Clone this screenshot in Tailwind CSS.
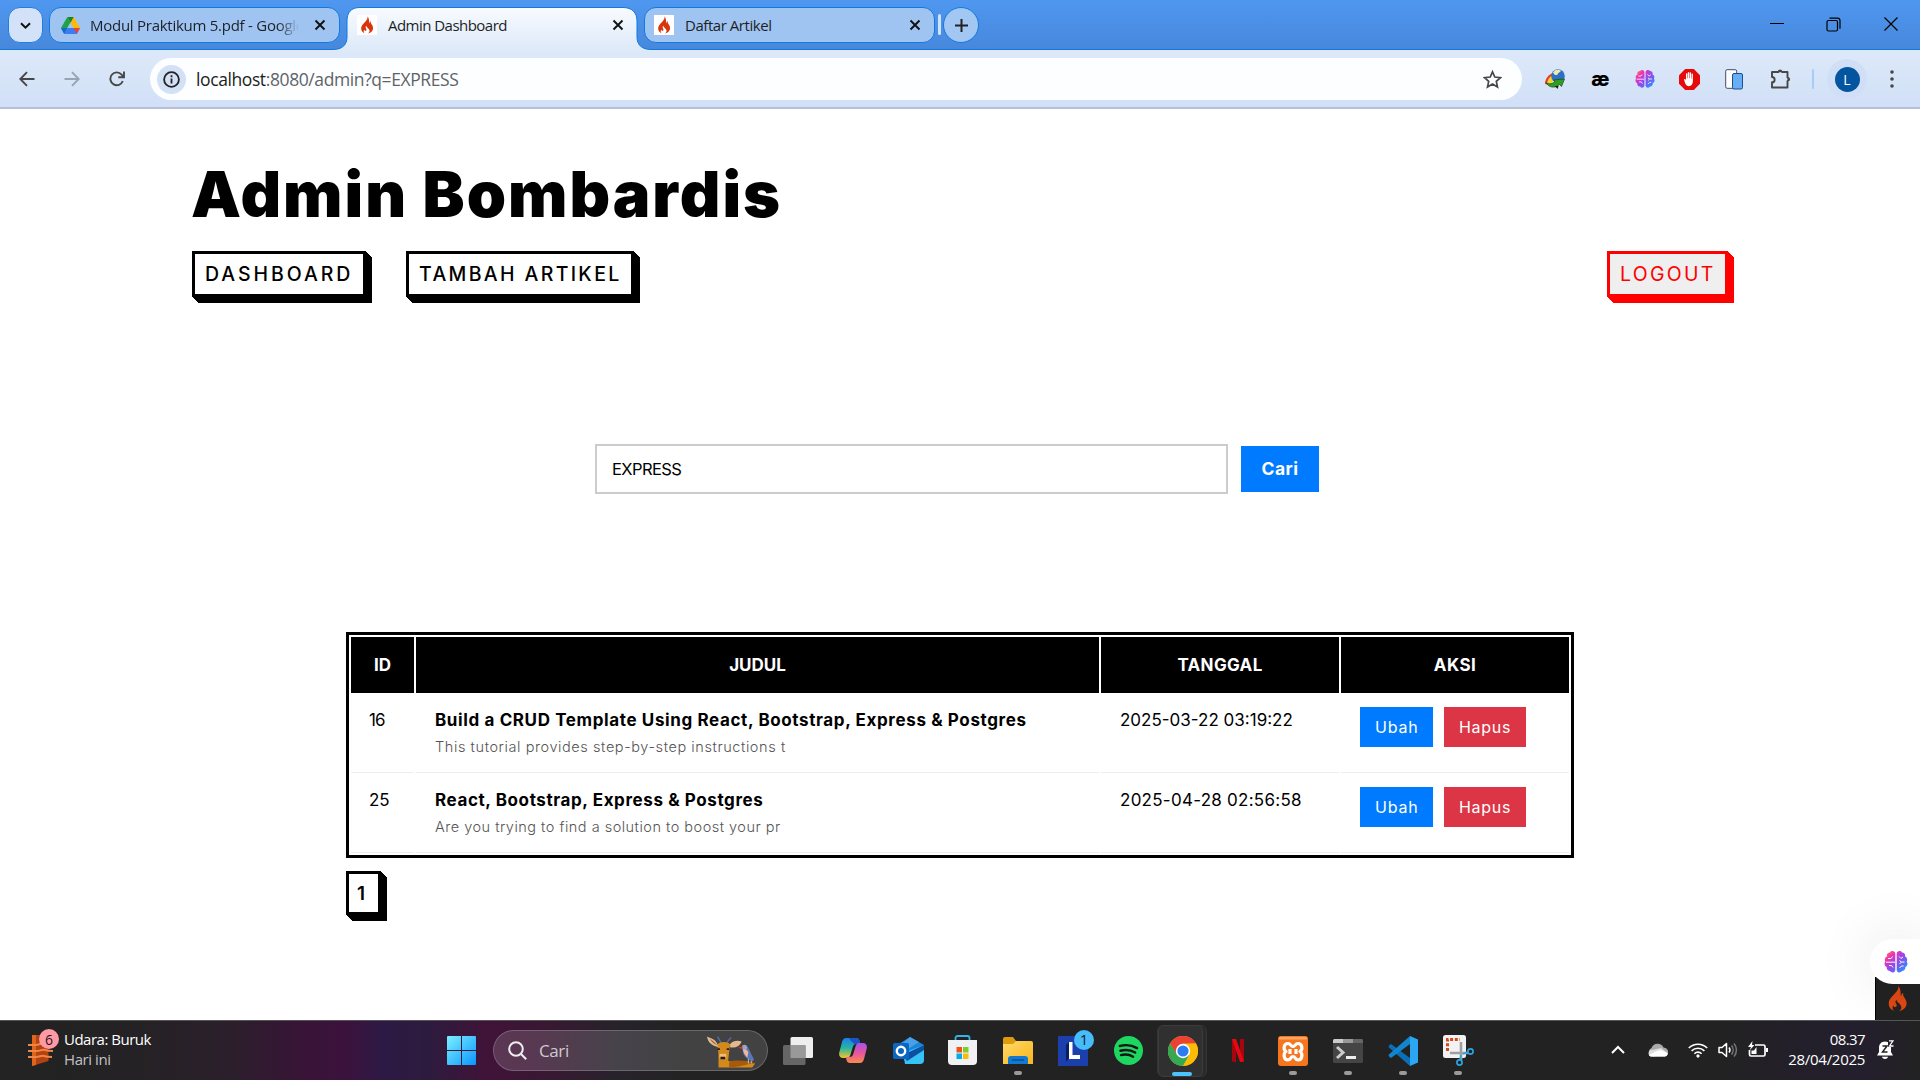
<!DOCTYPE html>
<html lang="id">
<head>
<meta charset="utf-8">
<title>Admin Dashboard</title>
<script src="https://cdn.jsdelivr.net/npm/@tailwindcss/browser@4"></script>
</head>
<body class="flex h-[1080px] w-[1920px] flex-col overflow-hidden bg-white font-['Inter',sans-serif] text-black">

<!-- shared symbols -->
<svg class="absolute size-0">
  <defs>
    <linearGradient id="brainGrad" x1="0" y1="0" x2="1" y2="1">
      <stop offset="0" stop-color="#ff9a1f"/><stop offset=".25" stop-color="#f032b4"/><stop offset=".55" stop-color="#8a4cf0"/><stop offset="1" stop-color="#12a4ff"/>
    </linearGradient>
    <linearGradient id="copA" x1="0" y1="0" x2="0" y2="1"><stop offset="0" stop-color="#1c7df0"/><stop offset=".5" stop-color="#27b6a0"/><stop offset="1" stop-color="#f2c52b"/></linearGradient>
    <linearGradient id="copB" x1="0" y1="0" x2="0" y2="1"><stop offset="0" stop-color="#a553e8"/><stop offset=".5" stop-color="#e8559f"/><stop offset="1" stop-color="#f98a4b"/></linearGradient>
    <linearGradient id="folderGrad" x1="0" y1="0" x2="1" y2="1"><stop offset="0" stop-color="#ffd968"/><stop offset="1" stop-color="#f8b51c"/></linearGradient>
    <linearGradient id="winGrad" x1="0" y1="0" x2="1" y2="1"><stop offset="0" stop-color="#7cf0ff"/><stop offset="1" stop-color="#0a94ff"/></linearGradient>
  </defs>
  <symbol id="flame" viewBox="0 0 24 24">
    <path fill="currentColor" d="M12.6.6c.8 3.200-1.400 5.200-3.600 7.600C6.400 11 4.200 13 4.200 16.600c0 3 1.900 5.300 4.900 6.600-1.700-1.600-2-3.600-.7-5.300.1 1.200.9 1.900 1.800 1.700 1.500-.2 1.400-2 .5-3.100-1-1.400-.4-2.800.5-3.500 0 2.700 4.200 3.600 4.200 6.800 0 1.500-.8 2.600-1.900 3.400 3.900-1 6.600-3.500 6.600-7 0-4.300-3.700-5.500-3.100-9.200-1.200.4-1.900 1.700-1.600 3C14 8.700 16 4.500 12.600.6z"/>
  </symbol>
  <symbol id="brain" viewBox="0 0 24 24">
    <path fill="url(#brainGrad)" d="M11.300 3.500C10.600.6 7.200.4 6 2.400 3.700 2.300 2.300 4.400 3 6.500.9 7.400.2 9.600 1.300 11.500-.2 13.600.6 16 2.700 17c-.3 2.400 1.300 4 3.400 4.100 1.300 2.200 4.600 1.900 5.200-.9zM12.700 3.500C13.400.6 16.800.4 18 2.400c2.300-.1 3.700 2 3 4.100 2.100.9 2.800 3.100 1.700 5 1.500 2.100.7 4.500-1.400 5.500.3 2.400-1.300 4-3.400 4.100-1.300 2.200-4.600 1.900-5.200-.9z"/>
    <path fill="none" stroke="#fff" stroke-width="1" d="M4 8.500h3l1.500-2M2 12.200h9M5 15.500h2.500l1.500 2M15 6.500l2 2 2-1.500M20.500 12h-3l-2 2M15.500 18l2-2h2M17.500 12l-2-1.500"/>
  </symbol>
  <symbol id="close" viewBox="0 0 12 12"><path d="M1.500 1.500l9 9M10.500 1.500l-9 9" stroke="currentColor" stroke-width="1.900" fill="none"/></symbol>
</svg>

<!-- tab strip -->
<header class="flex h-[50px] shrink-0 items-start border-b border-[#0f7ae0] bg-linear-to-b from-[#4f97f0] to-[#4788dc] pt-[7px] font-['Open_Sans',sans-serif] text-[15px] text-[#1d1f24]">
  <button class="ml-2 flex h-9 w-[35px] items-center justify-center rounded-xl border border-[#1f7fe2] bg-[#d3e2f8]">
    <svg class="size-[11px]" viewBox="0 0 11 11"><path d="M1 3.200l4.500 4.500L10 3.200" fill="none" stroke="#111" stroke-width="2"/></svg>
  </button>
  <div class="ml-[6px] flex h-9 w-[291px] items-center rounded-xl border border-[#0f7ae0] bg-[#9fc4f2] pl-[11px]">
    <svg class="h-[17px] w-[19px] shrink-0" viewBox="0 0 19 17">
      <path d="M6.300 0L0 11l3.200 5.500L9.500 5.600z" fill="#1ea446"/>
      <path d="M12.700 0L19 11h-6.400L6.400 0z" fill="#ffba00"/><path d="M6.300 0h6.400L9.500 5.700z" fill="#188038"/>
      <path d="M3.200 17L6.400 11H19l-3.200 6z" fill="#3a7df0"/><path d="M19 11l-3.200 5.800L12.600 11z" fill="#ea4335"/><path d="M0 11h6.400l-3.200 6z" fill="#1967d2"/>
      <path d="M9.500 5.700L6.400 11h6.200z" fill="#9fc4f2"/>
    </svg>
    <span class="ml-[10px] w-[218px] shrink-0 bg-linear-to-r from-[#1d1f24] from-86% to-transparent to-96% bg-clip-text tracking-[-0.26px] whitespace-nowrap text-transparent">Modul Praktikum 5.pdf - Google</span>
    <svg class="ml-[6px] size-3 shrink-0 text-[#111]"><use href="#close"/></svg>
  </div>
  <div class="relative ml-[7px] flex h-9 w-[291px] items-center pl-[10px]">
    <svg class="absolute -left-[14px] top-0 h-[44px] w-[318px]" viewBox="0 0 318 44">
      <defs><linearGradient id="tabGrad" x1="0" y1="0" x2="0" y2="1"><stop offset="0" stop-color="#f8fbff"/><stop offset="1" stop-color="#dde9f9"/></linearGradient></defs>
      <path d="M0 42.500C9 42.500 14 38 14 30V14C14 5.500 18 .5 27 .5H290C299 .5 304 5.500 304 14V30C304 38 309 42.500 318 42.500V44H0z" fill="url(#tabGrad)"/>
      <path d="M0 42.500C9 42.500 14 38 14 30V14C14 5.500 18 .5 27 .5H290C299 .5 304 5.500 304 14V30C304 38 309 42.500 318 42.500" fill="none" stroke="#0f7ae0"/>
    </svg>
    <span class="relative flex size-5 items-center justify-center bg-white text-[#d9350c]"><svg class="size-[18px]"><use href="#flame"/></svg></span>
    <span class="relative ml-[11px] w-[224px] tracking-[-0.53px]">Admin Dashboard</span>
    <svg class="relative size-3 text-[#111]"><use href="#close"/></svg>
  </div>
  <div class="ml-[6px] flex h-9 w-[291px] items-center rounded-xl border border-[#0f7ae0] bg-[#9fc4f2] pl-[9px]">
    <span class="flex size-5 items-center justify-center bg-white text-[#d9350c]"><svg class="size-[18px]"><use href="#flame"/></svg></span>
    <span class="ml-[11px] w-[224px] tracking-[-0.45px]">Daftar Artikel</span>
    <svg class="size-3 text-[#111]"><use href="#close"/></svg>
  </div>
  <span class="ml-[3px] mt-[7px] h-[21px] w-[3px] rounded bg-[#cfe2fb]"></span>
  <button class="ml-[2px] flex size-9 items-center justify-center rounded-full border border-[#0f7ae0] bg-[#a3c7f3]">
    <svg class="size-[13px]" viewBox="0 0 13 13"><path d="M6.500 0v13M0 6.500h13" stroke="#222" stroke-width="2"/></svg>
  </button>
  <div class="ml-auto mr-[22px] mt-[9px] flex items-center text-black">
    <svg class="h-4 w-[14px]" viewBox="0 0 14 16"><path d="M0 7.500h14" stroke="currentColor"/></svg>
    <svg class="ml-[42px] size-[15px]" viewBox="0 0 15 15" fill="none" stroke="currentColor" stroke-width="1.200"><rect x="1" y="3.500" width="10.500" height="10.500" rx="1.500"/><path d="M3.500 1.200h8A2.500 2.500 0 0 1 14 3.700v8"/></svg>
    <svg class="ml-[43px] size-[14px]" viewBox="0 0 14 14"><path d="M.5 .5l13 13M13.500 .5l-13 13" stroke="currentColor" stroke-width="1.200"/></svg>
  </div>
</header>

<!-- toolbar -->
<div class="flex h-[59px] shrink-0 items-center border-b-2 border-[#b7c0d6] bg-linear-to-b from-[#dde9f9] to-[#d1e0f7] pl-[19px] pt-[1px] text-[#474747]">
  <svg class="size-4" viewBox="0 0 16 16" fill="none" stroke="currentColor" stroke-width="1.900"><path d="M15.500 8H1.500M8 1.200L1.300 8 8 14.800"/></svg>
  <svg class="ml-[29px] size-4 text-[#98a3b3]" viewBox="0 0 16 16" fill="none" stroke="currentColor" stroke-width="1.900"><path d="M.5 8h14M8 1.200L14.700 8 8 14.800"/></svg>
  <svg class="ml-[29px] size-4" viewBox="0 0 16 16" fill="none" stroke="currentColor" stroke-width="1.900"><path d="M13.800 10A6.400 6.400 0 1 1 12.600 3.600L14.800 6M15 .5V6.200H9.300"/></svg>
  <div class="ml-[25px] flex h-[42px] w-[1372px] items-center rounded-full bg-[#fdfeff] pl-[7px]">
    <span class="flex size-[29px] items-center justify-center rounded-full bg-[#d3e1f7] text-[#222]">
      <svg class="size-[17px]" viewBox="0 0 17 17" fill="none" stroke="currentColor" stroke-width="1.800"><circle cx="8.500" cy="8.500" r="7.400"/><path d="M8.500 7.500v5M8.500 4.300v1.900"/></svg>
    </span>
    <span class="ml-[10px] font-['Open_Sans',sans-serif] text-[17.5px] tracking-[-0.4px] text-[#5f6368]"><span class="text-[#1c1d20]">localhost</span>:8080/admin?q=EXPRESS</span>
    <svg class="ml-auto mr-[20px] size-[19px]" viewBox="0 0 19 19" fill="none" stroke="currentColor" stroke-width="1.700"><path d="M9.500 1.800l2.300 5.200 5.700.6-4.200 3.800 1.200 5.600-5-2.900-5 2.900 1.200-5.600L1.500 7.600 7.200 7z"/></svg>
  </div>
  <svg class="ml-[23px] size-5" viewBox="0 0 20 20">
    <path d="M8 4C3 6 0 10 0 15l4 1 5-6z" fill="#e43a2a"/><path d="M8 6C4 8 2.500 11 2 15l3 1 5-6z" fill="#f7d42c"/>
    <circle cx="13" cy="7" r="6.800" fill="#2e6fc4"/><path d="M8 3.500c2-3 6-3.200 8-1.800-1 2-3 1.500-3.500 4-1.500 1-3.500 0-4.500-2.200z" fill="#ece8b0"/>
    <path d="M1 13.500c3 2 6.500 1.500 9-1L8.500 11l11-1-3 7.500-2-2C10 19.500 4 19 1 13.500z" fill="#2f9e22" stroke="#14500f" stroke-width=".7"/><path d="M10 17l2.500 3 1-3z" fill="#111"/>
  </svg>
  <span class="ml-[25px] w-5 text-center text-[20px] leading-none font-extrabold tracking-tight text-black">æ</span>
  <svg class="ml-[25px] size-[20px]"><use href="#brain"/></svg>
  <svg class="ml-[24px] size-[21px]" viewBox="0 0 21 21"><path d="M6.200 0h8.600L21 6.200v8.600L14.800 21H6.200L0 14.800V6.200z" fill="#e60a0a"/><path d="M5 10.500c.5-.8 1.500-.3 2 .6V4.800c0-.9 1.300-.9 1.300 0v4.500h.5V3.700c0-1 1.400-1 1.400 0v5.500h.5V4c0-1 1.400-1 1.400 0v5.500h.5V5.200c0-.9 1.300-.9 1.300 0V12c0 3-1.500 5.200-4 5.200-3 0-3.900-3-4.900-6.700z" fill="#fff"/></svg>
  <svg class="ml-[25px] h-[21px] w-[18px]" viewBox="0 0 18 21"><rect x=".7" y=".7" width="11" height="18.600" rx="1.500" fill="#fff" stroke="#444a66"/><rect x="7.500" y="4.500" width="10" height="15.500" rx="1.500" fill="#67aef5" stroke="#1d4e94"/></svg>
  <svg class="ml-[27px] size-[22px]" viewBox="0 0 22 22"><path d="M2 4h6.500a2 2 0 0 1 3.500 0h5.500v5.500a2 2 0 0 1 0 3.500v6.500H2v-5.200a2.600 2.600 0 0 0 0-5.300z" fill="none" stroke="currentColor" stroke-width="1.900" stroke-linejoin="round"/><path d="M8 3.500a2.100 2.100 0 0 1 4.200 0zM18 9.200a2.100 2.100 0 0 1 0 4.200z" fill="currentColor"/></svg>
  <span class="ml-[20px] h-5 w-[2px] rounded bg-[#a8ccf8]"></span>
  <span class="ml-[13px] flex size-10 items-center justify-center rounded-full bg-[#d0dff6]"><span class="flex size-[25px] items-center justify-center rounded-full bg-[#04559f] font-['Open_Sans',sans-serif] text-[14px] text-white">L</span></span>
  <svg class="ml-[23px] h-[18px] w-1" viewBox="0 0 4 18" fill="currentColor"><circle cx="2" cy="2" r="1.800"/><circle cx="2" cy="9" r="1.800"/><circle cx="2" cy="16" r="1.800"/></svg>
</div>

<!-- page -->
<main class="relative flex h-[911px] shrink-0 flex-col overflow-hidden bg-white px-[192px] pt-[45px]">
  <h1 class="-ml-px text-[63px] leading-[80px] font-black tracking-[2px]">Admin Bombardis</h1>
  <nav class="mt-[17px] flex h-[46px] items-stretch text-[19.5px] font-medium">
    <a class="flex w-[174px] items-start border-[3px] border-black pl-[10px] leading-[41px] tracking-[2.95px] shadow-[1px_1px_#000,2px_2px_#000,3px_3px_#000,4px_4px_#000,5px_5px_#000,6px_6px_#000]">DASHBOARD</a>
    <a class="ml-[40px] flex w-[228px] items-start border-[3px] border-black pl-[10px] leading-[41px] tracking-[2.35px] whitespace-nowrap shadow-[1px_1px_#000,2px_2px_#000,3px_3px_#000,4px_4px_#000,5px_5px_#000,6px_6px_#000]">TAMBAH ARTIKEL</a>
    <a class="ml-auto flex w-[121px] items-start border-[3px] border-[#f00] bg-[#efefef] pl-[10px] leading-[41px] font-normal tracking-[2.3px] text-[#f00] shadow-[1px_1px_#f00,2px_2px_#f00,3px_3px_#f00,4px_4px_#f00,5px_5px_#f00,6px_6px_#f00]">LOGOUT</a>
  </nav>
  <form class="mt-[147px] ml-[403px] flex h-[50px] items-center text-[17px]">
    <input type="text" name="q" value="EXPRESS" class="h-[50px] w-[633px] border-2 border-[#ccc] pl-[15px] text-[16.5px] tracking-[-0.6px]">
    <button type="button" class="ml-[13px] h-[46px] w-[78px] bg-[#007bff] pt-px text-[17.5px] font-bold tracking-[0.5px] text-white">Cari</button>
  </form>
  <table class="mt-[138px] ml-[154px] w-[1228px] table-fixed border-separate border-spacing-[2px] border-[3px] border-black text-[17px]">
    <colgroup><col class="w-[63px]"><col class="w-[683px]"><col class="w-[238px]"><col class="w-[228px]"></colgroup>
    <thead>
      <tr class="h-14 font-bold text-white">
        <th class="bg-black p-0 pt-[2px]">ID</th><th class="bg-black p-0 pt-[2px]">JUDUL</th><th class="bg-black p-0 pt-[2px] tracking-[0.35px]">TANGGAL</th><th class="bg-black p-0 pt-[2px] tracking-[0.4px]">AKSI</th>
      </tr>
    </thead>
    <tbody>
      <tr class="h-[78px] align-top">
        <td class="border-b border-[#eee] pt-[13px] pl-[18px] leading-6 tracking-[-1px]">16</td>
        <td class="border-b border-[#eee] pt-[13px] pl-[19px]">
          <p class="leading-6 font-bold tracking-[0.62px] whitespace-nowrap">Build a CRUD Template Using React, Bootstrap, Express &amp; Postgres</p>
          <p class="mt-1 text-[14.5px] leading-[22px] font-light tracking-[0.58px] text-[#555]">This tutorial provides step-by-step instructions t</p>
        </td>
        <td class="border-b border-[#eee] pt-[13px] pl-[19px] leading-6">2025-03-22 03:19:22</td>
        <td class="border-b border-[#eee] pt-3 pl-[19px]">
          <div class="flex h-10 gap-[11px] text-[16px] leading-[40px] text-white">
            <a class="w-[73px] bg-[#007bff] pl-[15px] tracking-[0.8px]">Ubah</a><a class="w-[82px] bg-[#dc3545] pl-[15px] tracking-[0.7px]">Hapus</a>
          </div>
        </td>
      </tr>
      <tr class="h-[78px] align-top">
        <td class="border-b border-[#eee] pt-[13px] pl-[18px] leading-6 tracking-[-0.2px]">25</td>
        <td class="border-b border-[#eee] pt-[13px] pl-[19px]">
          <p class="leading-6 font-bold tracking-[0.6px]">React, Bootstrap, Express &amp; Postgres</p>
          <p class="mt-1 text-[14.5px] leading-[22px] font-light tracking-[0.49px] text-[#555]">Are you trying to find a solution to boost your pr</p>
        </td>
        <td class="border-b border-[#eee] pt-[13px] pl-[19px] leading-6 tracking-[0.26px]">2025-04-28 02:56:58</td>
        <td class="border-b border-[#eee] pt-3 pl-[19px]">
          <div class="flex h-10 gap-[11px] text-[16px] leading-[40px] text-white">
            <a class="w-[73px] bg-[#007bff] pl-[15px] tracking-[0.8px]">Ubah</a><a class="w-[82px] bg-[#dc3545] pl-[15px] tracking-[0.7px]">Hapus</a>
          </div>
        </td>
      </tr>
    </tbody>
  </table>
  <div class="mt-[13px] ml-[154px] flex h-[44px]">
    <a class="w-[35px] border-[3px] border-black pl-[8px] text-[19px] leading-[39px] font-semibold shadow-[1px_1px_#000,2px_2px_#000,3px_3px_#000,4px_4px_#000,5px_5px_#000,6px_6px_#000]">1</a>
  </div>

  <!-- floating widgets -->
  <div class="absolute right-0 bottom-0 flex h-[43px] w-[45px] items-center justify-center border-l border-black bg-[#222] pr-[2px] text-[#dd4814]"><svg class="size-[27px]"><use href="#flame"/></svg></div>
  <div class="absolute right-0 bottom-[36px] flex h-[45px] w-[50px] items-center rounded-l-full bg-white pl-[14px] shadow-[0_0_60px_rgba(0,0,0,0.12)]"><svg class="size-[24px]"><use href="#brain"/></svg></div>
</main>

<!-- taskbar -->
<footer class="flex h-[60px] shrink-0 items-center border-t border-[#555] bg-[linear-gradient(90deg,#232323_0px,#242224_130px,#2b1f2b_230px,#391338_310px,#3b123c_345px,#2c1a45_385px,#2d1b3e_430px,#401338_485px,#3a1733_540px,#26232b_620px,#222_690px,#222_1720px,#231f2b_1810px,#241f2c_1870px,#222_1920px)] font-['Open_Sans',sans-serif] text-[15px] text-white">
  <div class="relative -mt-[6px] ml-[28px] h-[37px] w-[31px]">
    <svg class="absolute top-[6px] left-0 h-[31px] w-[25px]" viewBox="0 0 25 31"><path d="M4 0h16.500v26L4 31z" fill="#b4420e"/><path d="M4 0h4v30L4 31z" fill="#e0651c"/><path d="M0 10h8c3 0 4-2 7-1s6 2 9 1M0 16h9c3 0 5-2 8-1s5 1 8 1M0 22h8c4 0 5-2 8-1s5 1 8 1" stroke="#f08548" stroke-width="2" fill="none"/></svg>
    <span class="absolute top-0 left-[11px] flex size-5 items-center justify-center rounded-full bg-[#ff9aa5] text-[14px] text-[#2b1518]">6</span>
  </div>
  <div class="-mt-1 ml-[5px] w-[90px] whitespace-nowrap">
    <p class="leading-5 tracking-[-0.5px]">Udara: Buruk</p>
    <p class="leading-5 tracking-[-0.43px] text-[#c4c0c4]">Hari ini</p>
  </div>
  <svg class="ml-[293px] size-[29px]" viewBox="0 0 29 29"><path d="M1 0h13v14H0V1a1 1 0 0 1 1-1zM15 0h13a1 1 0 0 1 1 1v13H15zM0 15h14v14H1a1 1 0 0 1-1-1zM15 15h14v13a1 1 0 0 1-1 1H15z" fill="url(#winGrad)"/></svg>
  <div class="ml-[17px] flex h-[41px] w-[275px] items-center rounded-full border border-white/20 bg-white/15 pl-[14px]">
    <svg class="size-[19px]" viewBox="0 0 19 19" fill="none" stroke="#eee" stroke-width="2"><circle cx="8" cy="8" r="6.800"/><path d="M13 13l5.200 5.200"/></svg>
    <span class="ml-[12px] w-[167px] text-[17px] tracking-[-0.4px] text-[#cfcacd]">Cari</span>
    <svg class="mt-[2px] h-[33px] w-[52px]" viewBox="0 0 54 33">
      <path d="M12 9C9 3 5 3 1 1c1 6 5 10 12 11zM25 9c3-4 8-4 12-3-2 5-6 7-12 6z" fill="#e2b98c"/><path d="M4 3c2 4 5 6 8 7z" fill="#8a5a3a"/>
      <path d="M16 8L12 1M21 8l5-6" stroke="#54689c" stroke-width="1.600"/>
      <path d="M12 9c3-3 10-3 13 0l-1 8-1 9c8 2 18-1 28 3l-3 4H13V20z" fill="#d28a1c"/><path d="M24 27c8-2 20-1 27 2-8 0-16 4-27 4z" fill="#a65a0c"/><path d="M14 19h7v5h-7z" fill="#edc079"/><path d="M15 22h5v2.500h-5zM12 13h2.500v2H12zM21.500 13H24v2h-2.500z" fill="#2a1c14"/>
      <path d="M38 10c4-1 6 2 7 5l5 10-2 2-5-3c-4-3-5-6-5-10z" fill="#5a76b4"/><path d="M38 10c0 5 1 9 5 13l1-6z" fill="#f0b5a0"/><circle cx="40" cy="12" r="2.600" fill="#9ba6bf"/><path d="M38 11l-5 1.500 5 1.500z" fill="#d93a2b"/><path d="M44 24v5M47 26v3" stroke="#ddd" stroke-width=".8"/>
    </svg>
  </div>
  <svg class="ml-[15px] h-[28px] w-[30px]" viewBox="0 0 30 28"><rect x="7.500" width="22.500" height="21" rx="1.500" fill="#eee"/><rect y="8" width="22.500" height="20" rx="1.500" fill="#666"/><rect x="7.500" y="8" width="15" height="13" fill="#999"/></svg>
  <svg class="ml-[26px] h-[27px] w-[28px]" viewBox="0 0 28 27">
    <path d="M7 1h10c2 0 3 1 3.500 3l.8 3h-4c-2 0-3 1-3.500 3l-2.500 8c-.6 2-1.600 3-3.500 3H4c-3.500 0-4.500-3-3.600-6L3 5C3.800 2.500 5 1 7 1z" fill="url(#copA)"/><path d="M10 1h7c2 0 3 1 3.500 3l.8 3h-6L12 4z" fill="#1b54c8"/>
    <path d="M21 26H11c-2 0-3-1-3.500-3l-.8-3h4c2 0 3-1 3.500-3l2.500-8c.6-2 1.600-3 3.500-3H24c3.500 0 4.500 3 3.600 6L25 22c-.8 2.500-2 4-4 4z" fill="url(#copB)"/>
  </svg>
  <svg class="ml-[26px] h-[28px] w-[31px]" viewBox="0 0 31 28"><path d="M4 8L17 0l14 8v10L10 20z" fill="#1a86d8"/><path d="M17 0l9 5-16 10-5-5z" fill="#49a0e8"/><path d="M31 8v15a4 4 0 0 1-4 4H12L10 16z" fill="#37c2f6"/><path d="M10 18L31 8v5L14 24z" fill="#0f4fa0"/><rect y="6" width="16" height="16" rx="1.500" fill="#0a66c2"/><circle cx="8" cy="14" r="4.200" fill="none" stroke="#fff" stroke-width="2.400"/></svg>
  <svg class="ml-[23px] h-[31px] w-[31px]" viewBox="0 0 31 31"><path d="M8.500 6V3a2 2 0 0 1 2-2h10a2 2 0 0 1 2 2v3" fill="none" stroke="#2fb5ea" stroke-width="1.800"/><path d="M1 5h29v21a4 4 0 0 1-4 4H5a4 4 0 0 1-4-4z" fill="#f0f1f3"/><path d="M9.500 12H15v5.500H9.500z" fill="#f1511b"/><path d="M16 12h5.500v5.500H16z" fill="#80cc28"/><path d="M9.500 18.500H15V24H9.500z" fill="#00adef"/><path d="M16 18.500h5.500V24H16z" fill="#fbbc09"/></svg>
  <div class="relative ml-[25px] flex h-[60px] w-[30px] items-center">
    <svg class="h-[27px] w-[30px]" viewBox="0 0 30 27"><path d="M0 2a2 2 0 0 1 2-2h8l3 4h15v8H0z" fill="#dc9a0c"/><path d="M0 7l10 0 3-3h15a2 2 0 0 1 2 2v21H0z" fill="url(#folderGrad)"/><path d="M5 27v-5a3 3 0 0 1 3-3h14a3 3 0 0 1 3 3v5z" fill="#1279d2"/><path d="M9 23h12" stroke="#0a4f94" stroke-width="1.500"/></svg>
    <span class="absolute bottom-[6px] left-[11px] h-1 w-2 rounded-full bg-[#9a9a9a]"></span>
  </div>
  <div class="relative ml-[25px] h-[30px] w-[30px] bg-[#1c3fae]">
    <svg class="size-[30px]" viewBox="0 0 30 30"><path d="M11 6v16l-3 4V9z" fill="#0c1f5c"/><path d="M11 6h3.500v13H22v4H11z" fill="#fff"/></svg>
    <span class="absolute -top-[6px] left-[16px] flex size-5 items-center justify-center rounded-full bg-[#47bcfb] text-[15px] text-[#10202c]">1</span>
  </div>
  <svg class="ml-[26px] size-[29px]" viewBox="0 0 24 24"><circle cx="12" cy="12" r="12" fill="#1ed760"/><path d="M4.800 8.300c4.800-1.300 10-.8 14.300 1.700M5.300 12.200c4-1.100 8.500-.7 12.200 1.500M5.800 15.800c3.500-.8 7-.5 10 1.300" fill="none" stroke="#151515" stroke-width="2" stroke-linecap="round"/></svg>
  <div class="relative ml-[14px] flex h-[52px] w-[50px] items-center rounded-md border border-[#353535] bg-[#2a2a2a]">
    <div class="flex h-[52px] w-[45px] items-center justify-center rounded-md border border-[#3c3c3c] bg-[#303030] pl-1">
      <svg class="size-[30px]" viewBox="0 0 30 30"><circle cx="15" cy="15" r="15" fill="#fbbc05"/><path d="M2 7.500A15 15 0 0 1 28 7.500L15 8.200 8.700 18.500z" fill="#ea4335"/><path d="M2 7.500A15 15 0 0 0 15 30l6.500-11.200L9 18.500z" fill="#34a853"/><path d="M28 7.500H15l6.500 11.300L15 30A15 15 0 0 0 28 7.500z" fill="#fbbc05"/><circle cx="15" cy="15" r="7.200" fill="#fff"/><circle cx="15" cy="15" r="5.600" fill="#2b7cf0"/></svg>
    </div>
    <span class="absolute bottom-0 left-[14px] h-1 w-5 rounded-full bg-[#4cc2ff]"></span>
  </div>
  <svg class="ml-[25px] h-[23px] w-3" viewBox="0 0 12 23"><path d="M0 0h4v23l-4-.5zM8 0h4v22.500L8 23z" fill="#a8060f"/><path d="M0 0h4l8 22.500L8 23z" fill="#e50914"/></svg>
  <div class="relative ml-[34px] flex h-[60px] w-[30px] items-center">
    <svg class="size-[30px]" viewBox="0 0 30 30"><rect width="30" height="30" rx="3" fill="#f5761f"/><rect x="1" y="1" width="28" height="2.500" rx="1" fill="#fba566"/><path d="M8 15.500C5 17.500 5.500 24 10 24c3 0 2.500-3.500 5-3.500s2 3.500 5 3.500c4.500 0 5-6.500 2-8.500 3-2 2.500-8-2-8-3 0-2.500 3-5 3s-2-3-5-3c-4.500 0-5 6-2 8zM12 13v5M18 13v5" fill="none" stroke="#fff" stroke-width="3.200" stroke-linejoin="round"/></svg>
    <span class="absolute bottom-[6px] left-[11px] h-1 w-2 rounded-full bg-[#9a9a9a]"></span>
  </div>
  <div class="relative ml-[25px] flex h-[60px] w-[30px] items-center">
    <svg class="h-[24px] w-[30px]" viewBox="0 0 30 24"><rect width="30" height="24" rx="1.500" fill="#454545"/><path d="M1.500 0H10v4H0V1.500A1.500 1.500 0 0 1 1.500 0z" fill="#ccc"/><path d="M10 0h10v4H10z" fill="#999"/><path d="M20 0h8.500A1.500 1.500 0 0 1 30 1.500V4H20z" fill="#666"/><path d="M4 8l6 5.500L4 19" fill="none" stroke="#ccc" stroke-width="3"/><path d="M13 17h10v3H13z" fill="#eee"/></svg>
    <span class="absolute bottom-[6px] left-[11px] h-1 w-2 rounded-full bg-[#9a9a9a]"></span>
  </div>
  <div class="relative ml-[25px] flex h-[60px] w-[30px] items-center">
    <svg class="size-[30px]" viewBox="0 0 30 30"><path d="M1 9.500l2-1.500L22 22v8L.6 11.300z" fill="#0b6fb8"/><path d="M1 20.500l2 1.500L22 8V0L.6 18.700z" fill="#1285cf"/><path d="M22 0l8 3.500v23L22 30z" fill="#2aa6f2"/></svg>
    <span class="absolute bottom-[6px] left-[11px] h-1 w-2 rounded-full bg-[#9a9a9a]"></span>
  </div>
  <div class="relative ml-[25px] flex h-[60px] w-[30px] items-center">
    <svg class="h-[31px] w-[31px] shrink-0" viewBox="0 0 31 31"><rect width="23" height="23" rx="2.500" fill="#f2f2f2"/><path d="M4.500 16V4.500H17" fill="none" stroke="#d24a1a" stroke-width="3" stroke-dasharray="3 1.700"/><path d="M18 7v18M7 18h18" stroke="#9aa0a6" stroke-width="2.600"/><circle cx="27.500" cy="16.500" r="2.600" fill="none" stroke="#2aa4e0" stroke-width="1.700"/><circle cx="16.500" cy="27.500" r="2.600" fill="none" stroke="#2aa4e0" stroke-width="1.700"/><path d="M20 19l5-2M18 20l-1 5" stroke="#2aa4e0" stroke-width="1.500"/></svg>
    <span class="absolute bottom-[6px] left-[11px] h-1 w-2 rounded-full bg-[#9a9a9a]"></span>
  </div>
  <div class="-mt-[2px] ml-auto flex items-center">
    <svg class="h-[9px] w-[14px]" viewBox="0 0 14 9"><path d="M1 8l6-6 6 6" fill="none" stroke="#fff" stroke-width="2"/></svg>
    <svg class="ml-[23px] h-[14px] w-5" viewBox="0 0 20 14"><path d="M5 13.500A4.500 4.500 0 0 1 3.500 5 6.500 6.500 0 0 1 15.500 4.500 4.500 4.500 0 0 1 19 12z" fill="#a9a9a9"/><path d="M1 12c-1.500-3 1-6 3.500-5L13 5l6.500 5c0 2-1 3.500-3 3.500H4c-1.500 0-2.500-.5-3-1.500z" fill="#ddd"/><path d="M1 12l8-4c2-1 3-1 5-.5l5.500 2.500c.5 2-1 3.500-3 3.500H4c-1.500 0-2.500-.5-3-1.500z" fill="#fff"/></svg>
    <svg class="ml-[20px] h-[16px] w-5" viewBox="0 0 20 16" fill="none" stroke="#fff" stroke-width="1.600"><path d="M.8 6a13 13 0 0 1 18.400 0M3.600 8.900a9 9 0 0 1 12.800 0M6.400 11.700a5 5 0 0 1 7.200 0"/><circle cx="10" cy="14" r="1.200" fill="#fff" stroke-width="1"/></svg>
    <svg class="ml-[10px] h-4 w-5" viewBox="0 0 20 16" fill="none" stroke="#fff" stroke-width="1.500"><path d="M1 5.500h3L8.500 1.500v13L4 10.500H1z" stroke-linejoin="round"/><path d="M11 5.500a4 4 0 0 1 0 5"/><path d="M13.500 3.500a7 7 0 0 1 0 9M16 1.500a10 10 0 0 1 0 13" stroke="#777"/></svg>
    <svg class="ml-[10px] h-[17px] w-5" viewBox="0 0 20 17"><path d="M7 4h8.500A1.500 1.500 0 0 1 17 5.500v8a1.500 1.500 0 0 1-1.500 1.500H3a1.500 1.500 0 0 1-1.500-1.500V9" fill="none" stroke="#fff" stroke-width="1.700"/><path d="M18 7h2v4h-2zM3.500 13V9.500H6L8.500 6v7zM4.500 0L0 6h3L1.500 9.500 6.500 4H4z" fill="#fff"/></svg>
    <div class="-mt-[2px] ml-[19px] w-[78px] text-right"><p class="leading-5 tracking-[-0.6px]">08.37</p><p class="leading-5 tracking-[-0.29px] whitespace-nowrap">28/04/2025</p></div>
    <svg class="mr-[26px] ml-[12px] h-5 w-[17px]" viewBox="0 0 17 20"><path d="M8 1.500c4 0 6 3 6 6V12l2 3.500H0L2 12V7.500c0-3 2-6 6-6zM5 16.800h6c-.5 3-5.500 3-6 0z" fill="#fff"/><path d="M5.500 6h4.500l-4.500 6h5" fill="none" stroke="#222" stroke-width="1.500"/><path d="M11 0h6v7h-6z" fill="#241f2c"/><path d="M12 .8h4L12.500 6h4" fill="none" stroke="#fff" stroke-width="1.300"/></svg>
  </div>
</footer>
</body>
</html>
